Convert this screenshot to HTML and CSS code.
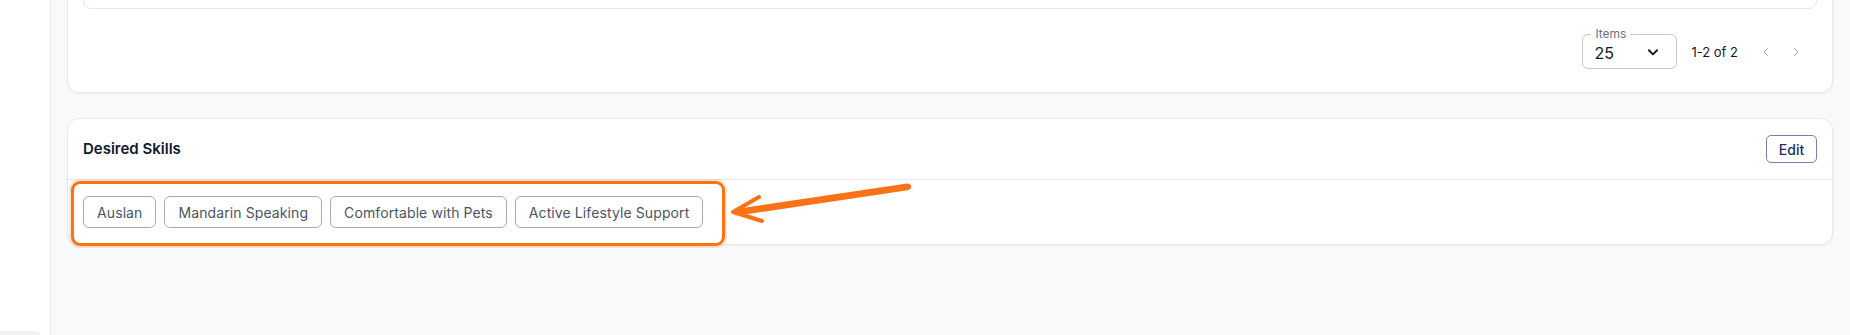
FILE: index.html
```html
<!DOCTYPE html>
<html lang="en">
<head>
<meta charset="utf-8">
<title>Desired Skills</title>
<link rel="stylesheet" href="styles.css">
</head>
<body>
<div class="app">
  <aside class="sidebar">
    <div class="side-item"></div>
  </aside>
  <main class="main">
    <section class="card card-list">
      <div class="table-box"></div>
      <div class="pager">
        <div class="select">
          <span class="select-label">Items</span>
          <span class="select-value">25</span>
          <svg class="select-chev" width="14" height="14" viewBox="0 0 24 24" fill="none" stroke="#111827" stroke-width="3.2" stroke-linecap="round" stroke-linejoin="round"><path d="M5 9l7 7 7-7"/></svg>
        </div>
        <span class="pager-count">1-2 of 2</span>
        <div class="pager-nav">
          <button class="nav-btn" aria-label="Previous">
            <svg width="12" height="12" viewBox="0 0 24 24" fill="none" stroke="#9ca3af" stroke-width="2" stroke-linecap="round" stroke-linejoin="round"><path d="M15 5l-7 7 7 7"/></svg>
          </button>
          <button class="nav-btn" aria-label="Next">
            <svg width="12" height="12" viewBox="0 0 24 24" fill="none" stroke="#9ca3af" stroke-width="2" stroke-linecap="round" stroke-linejoin="round"><path d="M9 5l7 7-7 7"/></svg>
          </button>
        </div>
      </div>
    </section>

    <section class="card card-skills">
      <header class="card-head">
        <h2 class="card-title">Desired Skills</h2>
        <button class="btn-edit">Edit</button>
      </header>
      <div class="card-body">
        <div class="chips">
          <span class="chip">Auslan</span>
          <span class="chip">Mandarin Speaking</span>
          <span class="chip">Comfortable with Pets</span>
          <span class="chip">Active Lifestyle Support</span>
        </div>
        <div class="highlight"></div>
      </div>
    </section>
  </main>
</div>
<svg class="annot" width="1850" height="335" viewBox="0 0 1850 335">
  <path d="M736 209 L907 183.5 Q912 184 911 187.5 Q910 190 906 190.5 L741 215 Z" fill="#f97316"/>
  <path d="M733 212 L759 197 M733 212 L762 221" stroke="#f97316" stroke-width="4" stroke-linecap="round" fill="none"/>
  <path d="M731 212 L745 208.5 L746 215.5 Z" fill="#f97316"/>
</svg>
</body>
</html>
```

FILE: styles.css
```css
* { box-sizing: border-box; }
html, body { margin: 0; padding: 0; }
body {
  position: relative;
  width: 1850px;
  height: 335px;
  overflow: hidden;
  background: #f8f9fb;
  font-family: Inter, "Noto Sans", "Liberation Sans", sans-serif;
  color: #111827;
}
.app {
  display: flex;
  height: 335px;
}
.sidebar {
  width: 51px;
  flex: none;
  background: #ffffff;
  border-right: 1px solid #eceef2;
  display: flex;
  flex-direction: column;
  justify-content: flex-end;
}
.side-item {
  width: 40px;
  height: 4px;
  background: #f1f2f4;
  border-top-right-radius: 6px;
}
.main {
  flex: 1;
  padding: 0 17px 0 16px;
  display: flex;
  flex-direction: column;
  gap: 25px;
}
.card {
  background: #ffffff;
  border: 1px solid #e6e8ec;
  border-radius: 12px;
  box-shadow: 0 1px 2px rgba(16, 24, 40, 0.05);
}
.card-list {
  margin-top: -60px;
  padding: 15px 15px 23px 15px;
}
.table-box {
  height: 53px;
  border: 1px solid #e6e8ec;
  border-radius: 8px;
}
.pager {
  margin-top: 25px;
  display: flex;
  justify-content: flex-end;
  align-items: center;
  gap: 14px;
  padding-right: 7px;
}
.select {
  position: relative;
  width: 95px;
  height: 35px;
  border: 1px solid #c3c7ce;
  border-radius: 6px;
  display: flex;
  align-items: center;
  padding: 0 16px 0 11px;
}
.select-label {
  position: absolute;
  top: -9px;
  left: 8px;
  padding: 0 4px;
  background: #ffffff;
  font-size: 12px;
  line-height: 16px;
  color: #6b7280;
}
.select-value {
  flex: 1;
  font-size: 16px;
  line-height: 20px;
  padding-top: 2px;
  color: #111827;
}
.select-chev { flex: none; margin-top: 1px; }
.pager-count {
  font-size: 13px;
  line-height: 20px;
  color: #111827;
}
.pager-nav {
  display: flex;
  gap: 2px;
}
.nav-btn {
  width: 28px;
  height: 28px;
  border: none;
  background: transparent;
  padding: 0;
  display: flex;
  align-items: center;
  justify-content: center;
}
.card-head {
  display: flex;
  align-items: center;
  justify-content: space-between;
  padding: 16px 15px 16px 15px;
  border-bottom: 1px solid #e6e8ec;
}
.card-title {
  margin: 0;
  font-size: 15px;
  font-weight: 600;
  line-height: 28px;
  color: #0f172a;
}
.btn-edit {
  height: 28px;
  width: 51px;
  padding: 0;
  font-family: inherit;
  font-size: 14px;
  font-weight: 500;
  color: #1e2f5c;
  background: #ffffff;
  border: 1px solid #7582a0;
  border-radius: 5px;
}
.card-body {
  position: relative;
  padding: 16px 15px 16px 15px;
}
.chips {
  display: flex;
  gap: 8px;
}
.chip {
  display: inline-flex;
  align-items: center;
  height: 32px;
  padding: 0 13px;
  border: 1px solid #a7acb5;
  border-radius: 6px;
  font-size: 14px;
  letter-spacing: 0.1px;
  color: #4b5563;
}
.highlight {
  position: absolute;
  left: 3px;
  top: 1px;
  width: 654px;
  height: 65px;
  border: 3px solid #f97316;
  border-radius: 9px;
  box-shadow: 0 0 0 2px rgba(249, 115, 22, 0.2);
  pointer-events: none;
}
.annot {
  position: absolute;
  left: 0;
  top: 0;
  pointer-events: none;
}
```
